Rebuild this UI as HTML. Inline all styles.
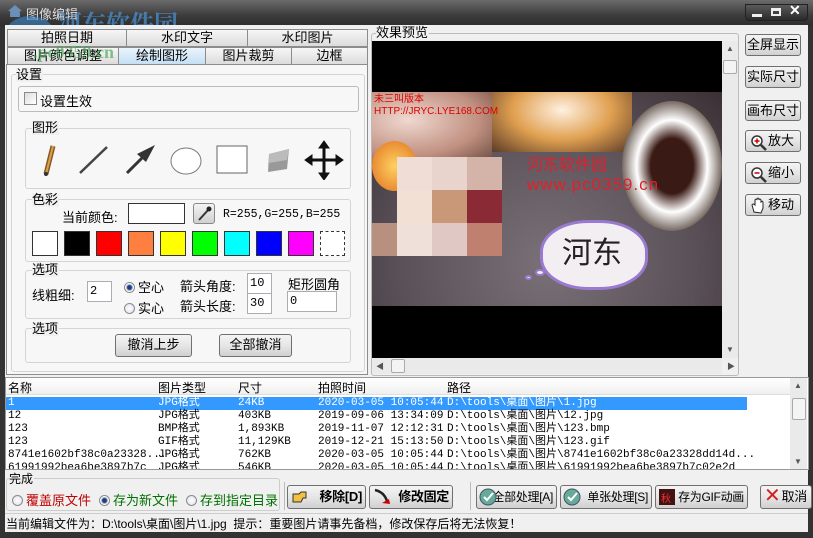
<!DOCTYPE html>
<html><head><meta charset="utf-8">
<style>
*{box-sizing:border-box;margin:0;padding:0}
body{width:813px;height:538px;overflow:hidden;background:#333;font-family:"Liberation Sans","Noto Sans CJK SC",sans-serif;font-size:12px;color:#000;position:relative}
.a{position:absolute}
.title{left:0;top:0;width:813px;height:26px;background:linear-gradient(#6a6a6a,#3c3c3c 60%,#2e2e2e)}
.client{left:5px;top:25px;width:803px;height:507px;background:#f0f0f0}
.tab{position:absolute;height:18px;border:1px solid #8c8c8c;background:linear-gradient(#f6f6f6,#dcdcdc);text-align:center;font-size:13px;line-height:16px}
.grp{position:absolute;border:1px solid #d4d4d4;border-radius:3px}
.lbl{position:absolute;background:#f0f0f0;font-size:13px;line-height:14px;padding-right:1px}
.btn{position:absolute;border:1px solid #707070;border-radius:3px;background:linear-gradient(#f4f4f4,#e6e6e6 50%,#d0d0d0);text-align:center;font-size:13px;line-height:20px}
.bb{font-size:12px;line-height:22px;text-align:right;padding-right:3px;white-space:nowrap;letter-spacing:-0.3px}
.inp{position:absolute;background:#fff;border:1px solid #abadb3;font-family:"Liberation Mono","Noto Sans CJK SC",monospace;font-size:12px;padding-left:2px;line-height:18px}
.sw{position:absolute;top:231px;width:26px;height:25px;border:1px solid #333}
.radio{display:inline-block;width:11px;height:11px;border-radius:50%;border:1px solid #8a8a8a;background:radial-gradient(#fff,#dde);vertical-align:-1px;margin-right:3px}
.radio.on{background:radial-gradient(#1a3c8a 30%,#9ab 45%,#fff 60%)}
.row{position:absolute;left:0;width:740px;height:13px;font-family:"Liberation Mono","Noto Sans CJK SC",monospace;font-size:11px;line-height:13px;white-space:nowrap}
.row span{position:absolute}
.sb{position:absolute;background:#eaeaea}
</style></head><body>
<div class="a title"></div>
<div class="a" style="left:8px;top:5px;width:14px;height:12px;background:#6c8fb8;clip-path:polygon(50% 0,100% 50%,85% 50%,85% 100%,15% 100%,15% 50%,0 50%)"></div>
<div class="a" style="left:26px;top:4px;color:#ddd;font-size:13px">图像编辑</div>
<div class="a" style="left:58px;top:4px;color:#4a8fd0;font-size:24px;font-weight:bold;opacity:.75;font-family:'Noto Serif CJK SC',serif">河东软件园</div>
<div class="a" style="left:5px;top:16px;width:50px;height:38px;border-radius:50%;background:#3d8fd8;opacity:.55"></div>
<div class="a" style="left:745px;top:4px;width:63px;height:17px;background:linear-gradient(#5a5a5a,#2a2a2a);border:1px solid #222;border-radius:0 0 4px 4px"></div>
<div class="a" style="left:752px;top:14px;width:10px;height:3px;background:#eee"></div>
<div class="a" style="left:771px;top:8px;width:10px;height:8px;border:2px solid #eee;border-top-width:3px"></div>
<div class="a" style="left:789px;top:2px;color:#fff;font-weight:bold;font-size:14px">✕</div>

<div class="a client"></div>
<div class="tab" style="left:7px;top:29px;width:120px">拍照日期</div>
<div class="tab" style="left:126px;top:29px;width:122px">水印文字</div>
<div class="tab" style="left:247px;top:29px;width:121px">水印图片</div>
<div class="tab" style="left:7px;top:47px;width:112px">图片颜色调整</div>
<div class="tab" style="left:118px;top:47px;width:88px;background:linear-gradient(#eaf4fb,#c4e0f4)">绘制图形</div>
<div class="tab" style="left:205px;top:47px;width:87px">图片裁剪</div>
<div class="tab" style="left:291px;top:47px;width:77px">边框</div>
<div class="a" style="left:33px;top:42px;color:#3aa04a;font-size:18px;font-weight:bold;opacity:.6;font-family:'Liberation Serif',serif">.pc0359.cn</div>
<div class="a" style="left:6px;top:64px;width:362px;height:311px;border:1px solid #8c8c8c;background:#f7f7f7"></div>

<div class="grp" style="left:11px;top:74px;width:354px;height:298px"></div>
<div class="lbl" style="left:16px;top:68px">设置</div>
<div class="grp" style="left:18px;top:86px;width:341px;height:26px;border-color:#bbb"></div>
<div class="a" style="left:24px;top:92px;width:13px;height:13px;border:1px solid #8a8a8a;background:linear-gradient(135deg,#ddd,#fff)"></div>
<div class="a" style="left:40px;top:91px;font-size:13px">设置生效</div>

<div class="grp" style="left:25px;top:128px;width:326px;height:61px"></div>
<div class="lbl" style="left:32px;top:121px">图形</div>
<svg class="a" style="left:25px;top:140px" width="326" height="40">
<g transform="translate(18,4)"><line x1="10" y1="2" x2="3" y2="30" stroke="#8a5a20" stroke-width="5"/><line x1="10" y1="2" x2="3" y2="30" stroke="#d9a050" stroke-width="2"/><circle cx="3" cy="30" r="2" fill="#333"/></g>
<line x1="55" y1="33" x2="82" y2="7" stroke="#444" stroke-width="2.5"/>
<line x1="102" y1="33" x2="120" y2="15" stroke="#333" stroke-width="3"/><polygon points="130,5 112,14 121,22" fill="#333"/>
<ellipse cx="161" cy="21" rx="15" ry="13" fill="#fff" stroke="#777"/>
<rect x="192" y="6" width="30" height="27" fill="#fff" stroke="#666"/>
<polygon points="244,14 264,9 262,29 243,32" fill="#999"/><polygon points="244,14 264,9 262,20 244,23" fill="#bbb"/>
<g fill="#111" stroke="#111"><line x1="299" y1="5" x2="299" y2="36" stroke-width="3"/><line x1="284" y1="20" x2="314" y2="20" stroke-width="3"/>
<polygon points="299,1 294,8 304,8"/><polygon points="299,40 294,33 304,33"/><polygon points="280,20 287,15 287,25"/><polygon points="318,20 311,15 311,25"/></g>
</svg>

<div class="grp" style="left:25px;top:199px;width:326px;height:63px"></div>
<div class="lbl" style="left:32px;top:193px">色彩</div>
<div class="a" style="left:62px;top:207px;font-size:13px">当前颜色:</div>
<div class="a" style="left:128px;top:203px;width:57px;height:21px;border:1px solid #333;background:#fff"></div>
<div class="a" style="left:193px;top:203px;width:22px;height:21px;border:1px solid #888;border-radius:3px;background:linear-gradient(#f4f4f4,#d0d0d0)"></div>
<svg class="a" style="left:196px;top:205px" width="17" height="17"><line x1="3" y1="15" x2="13" y2="4" stroke="#333" stroke-width="2"/><circle cx="13" cy="4" r="2.5" fill="#222"/></svg>
<div class="a" style="left:223px;top:208px;font-family:'Liberation Mono',monospace;font-size:11.5px">R=255,G=255,B=255</div>
<div class="sw" style="left:32px;background:#fff"></div>
<div class="sw" style="left:64px;background:#000"></div>
<div class="sw" style="left:96px;background:#f00"></div>
<div class="sw" style="left:128px;background:#ff7f40"></div>
<div class="sw" style="left:160px;background:#ff0"></div>
<div class="sw" style="left:192px;background:#0f0"></div>
<div class="sw" style="left:224px;background:#0ff"></div>
<div class="sw" style="left:256px;background:#00f"></div>
<div class="sw" style="left:288px;background:#f0f"></div>
<div class="sw" style="left:320px;width:25px;background:#fff;border:1px dashed #333"></div>

<div class="grp" style="left:25px;top:270px;width:326px;height:49px"></div>
<div class="lbl" style="left:32px;top:263px">选项</div>
<div class="a" style="left:32px;top:285px;font-size:13px">线粗细:</div>
<div class="inp" style="left:87px;top:281px;width:25px;height:21px">2</div>
<div class="a" style="left:124px;top:277px;font-size:13px"><span class="radio on"></span>空心</div>
<div class="a" style="left:124px;top:298px;font-size:13px"><span class="radio"></span>实心</div>
<div class="a" style="left:180px;top:276px;font-size:13px">箭头角度:</div>
<div class="a" style="left:180px;top:296px;font-size:13px">箭头长度:</div>
<div class="inp" style="left:247px;top:273px;width:25px;height:21px">10</div>
<div class="inp" style="left:247px;top:293px;width:25px;height:21px">30</div>
<div class="a" style="left:288px;top:274px;font-size:13px">矩形圆角</div>
<div class="inp" style="left:287px;top:291px;width:50px;height:21px">0</div>

<div class="grp" style="left:25px;top:328px;width:326px;height:35px"></div>
<div class="lbl" style="left:32px;top:322px">选项</div>
<div class="btn" style="left:115px;top:334px;width:77px;height:23px">撤消上步</div>
<div class="btn" style="left:219px;top:334px;width:73px;height:23px">全部撤消</div>

<!-- preview -->
<div class="grp" style="left:371px;top:33px;width:368px;height:343px;border-color:#bbb"></div>
<div class="lbl" style="left:376px;top:26px">效果预览</div>
<div class="a" style="left:372px;top:41px;width:350px;height:317px;background:#000;overflow:hidden">
 <div class="a" style="left:0;top:51px;width:350px;height:214px;background:radial-gradient(ellipse at 50% 80%,#7a7078,#5a5058 60%,#3a3034)"></div>
 <div class="a" style="left:0;top:51px;width:120px;height:70px;background:radial-gradient(ellipse at 30% 40%,#f0d8d0,#c09080 60%,#6a4a40)"></div>
 <div class="a" style="left:120px;top:51px;width:140px;height:60px;background:radial-gradient(ellipse at 50% 30%,#fff0e0,#e0a050 50%,#5a3a28)"></div>
 <div class="a" style="left:0;top:100px;width:45px;height:50px;border-radius:50%;background:radial-gradient(#ffd060,#e07020)"></div>
 <div class="a" style="left:25px;top:116px;width:35px;height:33px;background:#f0ddd6"></div>
 <div class="a" style="left:60px;top:116px;width:35px;height:33px;background:#e8d4cc"></div>
 <div class="a" style="left:95px;top:116px;width:35px;height:33px;background:#d4b4a8"></div>
 <div class="a" style="left:25px;top:149px;width:35px;height:33px;background:#f2e0d4"></div>
 <div class="a" style="left:60px;top:149px;width:35px;height:33px;background:#c89878"></div>
 <div class="a" style="left:95px;top:149px;width:35px;height:33px;background:#8a2a34"></div>
 <div class="a" style="left:25px;top:182px;width:35px;height:33px;background:#f0e0da"></div>
 <div class="a" style="left:60px;top:182px;width:35px;height:33px;background:#e0c8c4"></div>
 <div class="a" style="left:95px;top:182px;width:35px;height:33px;background:#c08070"></div>
 <div class="a" style="left:0;top:182px;width:25px;height:33px;background:#b89080"></div>
 <div class="a" style="left:250px;top:60px;width:100px;height:130px;border-radius:50%;background:radial-gradient(#3a1a14 30%,#fff 50%,#5a4a40 75%)"></div>
 <div class="a" style="left:168px;top:179px;width:108px;height:70px;border-radius:45%;background:#f2eef2;border:3px solid #9a7ad0"></div>
 <div class="a" style="left:190px;top:187px;font-size:30px;color:#222">河东</div>
 <div class="a" style="left:163px;top:228px;width:10px;height:7px;border-radius:50%;background:#f2eef2;border:2px solid #9a7ad0"></div>
 <div class="a" style="left:153px;top:234px;width:7px;height:5px;border-radius:50%;background:#f2eef2;border:2px solid #9a7ad0"></div>
 <div class="a" style="left:155px;top:110px;font-size:16px;color:#e0202a">河东软件园</div>
 <div class="a" style="left:155px;top:134px;font-size:17px;color:#e0202a;letter-spacing:1px">www.pc0359.cn</div>
 <div class="a" style="left:2px;top:53px;font-size:10px;color:#d00;line-height:12px">未三叫版本<br>HTTP://JRYC.LYE168.COM</div>
</div>
<div class="sb" style="left:722px;top:41px;width:16px;height:317px"></div>
<div class="a" style="left:723px;top:60px;width:14px;height:14px;border:1px solid #aaa;border-radius:2px;background:#f4f4f4"></div>
<div class="a" style="left:726px;top:44px;font-size:8px;color:#555">▲</div>
<div class="a" style="left:726px;top:345px;font-size:8px;color:#555">▼</div>
<div class="sb" style="left:372px;top:358px;width:350px;height:16px"></div>
<div class="a" style="left:391px;top:359px;width:14px;height:14px;border:1px solid #aaa;border-radius:2px;background:#f4f4f4"></div>
<div class="a" style="left:376px;top:361px;font-size:8px;color:#555">◀</div>
<div class="a" style="left:727px;top:361px;font-size:8px;color:#555">▶</div>

<div class="btn" style="left:745px;top:34px;width:56px;height:22px">全屏显示</div>
<div class="btn" style="left:745px;top:66px;width:56px;height:22px">实际尺寸</div>
<div class="btn" style="left:745px;top:100px;width:56px;height:21px">画布尺寸</div>
<div class="btn" style="left:745px;top:130px;width:56px;height:22px;text-align:right;padding-right:6px">放大</div>
<div class="btn" style="left:745px;top:162px;width:56px;height:22px;text-align:right;padding-right:6px">缩小</div>
<div class="btn" style="left:745px;top:194px;width:56px;height:22px;text-align:right;padding-right:6px">移动</div>
<svg class="a" style="left:750px;top:134px" width="18" height="18"><circle cx="7" cy="7" r="5" fill="#fff" stroke="#333" stroke-width="1.5"/><line x1="11" y1="11" x2="16" y2="16" stroke="#333" stroke-width="2.5"/><path d="M4.5 7h5M7 4.5v5" stroke="#c00" stroke-width="1.5"/></svg>
<svg class="a" style="left:750px;top:166px" width="18" height="18"><circle cx="7" cy="7" r="5" fill="#fff" stroke="#333" stroke-width="1.5"/><line x1="11" y1="11" x2="16" y2="16" stroke="#333" stroke-width="2.5"/><path d="M4.5 7h5" stroke="#c00" stroke-width="1.5"/></svg>
<svg class="a" style="left:750px;top:197px" width="18" height="18"><path d="M4 15 L2 8 Q3 6 5 8 V3 Q6 1 7 3 V2 Q8 0 9 2 V3 Q10 1 11 3 V5 Q13 3 13 6 V11 L11 16 Z" fill="#fff" stroke="#222"/></svg>

<!-- list -->
<div class="a" style="left:5px;top:377px;width:804px;height:93px;background:#fff;border:1px solid #999"></div>
<div class="a" style="left:6px;top:378px;width:784px;height:17px;background:linear-gradient(#fff,#f0f0f0);border-bottom:1px solid #ddd"></div>
<div class="a" style="left:8px;top:379px;font-size:12px">名称</div>
<div class="a" style="left:158px;top:379px;font-size:12px">图片类型</div>
<div class="a" style="left:238px;top:379px;font-size:12px">尺寸</div>
<div class="a" style="left:318px;top:379px;font-size:12px">拍照时间</div>
<div class="a" style="left:447px;top:379px;font-size:12px">路径</div>
<div class="a" style="left:6px;top:397px;width:741px;height:13px;background:#3399ff"></div>
<div class="a" style="left:6px;top:397px;width:784px;height:72px;overflow:hidden">
<div class="row" style="top:0;color:#fff"><span style="left:2px">1</span><span style="left:152px">JPG格式</span><span style="left:232px">24KB</span><span style="left:312px">2020-03-05 10:05:44</span><span style="left:441px">D:\tools\桌面\图片\1.jpg</span></div>
<div class="row" style="top:13px"><span style="left:2px">12</span><span style="left:152px">JPG格式</span><span style="left:232px">403KB</span><span style="left:312px">2019-09-06 13:34:09</span><span style="left:441px">D:\tools\桌面\图片\12.jpg</span></div>
<div class="row" style="top:26px"><span style="left:2px">123</span><span style="left:152px">BMP格式</span><span style="left:232px">1,893KB</span><span style="left:312px">2019-11-07 12:12:31</span><span style="left:441px">D:\tools\桌面\图片\123.bmp</span></div>
<div class="row" style="top:39px"><span style="left:2px">123</span><span style="left:152px">GIF格式</span><span style="left:232px">11,129KB</span><span style="left:312px">2019-12-21 15:13:50</span><span style="left:441px">D:\tools\桌面\图片\123.gif</span></div>
<div class="row" style="top:52px"><span style="left:2px">8741e1602bf38c0a23328...</span><span style="left:152px">JPG格式</span><span style="left:232px">762KB</span><span style="left:312px">2020-03-05 10:05:44</span><span style="left:441px">D:\tools\桌面\图片\8741e1602bf38c0a23328dd14d...</span></div>
<div class="row" style="top:65px"><span style="left:2px">61991992bea6be3897b7c</span><span style="left:152px">JPG格式</span><span style="left:232px">546KB</span><span style="left:312px">2020-03-05 10:05:44</span><span style="left:441px">D:\tools\桌面\图片\61991992bea6be3897b7c02e2d</span></div>
</div>
<div class="sb" style="left:790px;top:378px;width:17px;height:91px"></div>
<div class="a" style="left:792px;top:398px;width:14px;height:22px;border:1px solid #aaa;border-radius:2px;background:#f4f4f4"></div>
<div class="a" style="left:794px;top:381px;font-size:8px;color:#555">▲</div>
<div class="a" style="left:794px;top:457px;font-size:8px;color:#555">▼</div>

<!-- bottom -->
<div class="grp" style="left:6px;top:478px;width:274px;height:33px;border-color:#ccc"></div>
<div class="lbl" style="left:9px;top:472px;font-size:12px">完成</div>
<div class="a" style="left:12px;top:490px;font-size:13px;color:#c00000"><span class="radio"></span>覆盖原文件</div>
<div class="a" style="left:99px;top:490px;font-size:13px;color:#007000"><span class="radio on"></span>存为新文件</div>
<div class="a" style="left:186px;top:490px;font-size:13px;color:#007000"><span class="radio"></span>存到指定目录</div>
<div class="a" style="left:284px;top:482px;width:1px;height:28px;background:#bbb"></div>
<div class="a" style="left:470px;top:482px;width:1px;height:28px;background:#bbb"></div>
<div class="btn bb" style="left:287px;top:485px;width:79px;height:24px;font-weight:bold;font-size:13px">移除[D]</div>
<div class="btn bb" style="left:369px;top:485px;width:84px;height:24px;font-weight:bold;font-size:13px">修改固定</div>
<div class="btn bb" style="left:476px;top:485px;width:81px;height:24px">全部处理[A]</div>
<div class="btn bb" style="left:560px;top:485px;width:92px;height:24px">单张处理[S]</div>
<div class="btn bb" style="left:655px;top:485px;width:93px;height:24px">存为GIF动画</div>
<div class="btn bb" style="left:760px;top:485px;width:52px;height:24px;padding-right:4px;font-size:13px">取消</div>
<svg class="a" style="left:291px;top:489px" width="18" height="16"><path d="M2 5h6l2-2h5v6h-3l-2 4H2z" fill="#f4c040" stroke="#333"/></svg>
<svg class="a" style="left:372px;top:487px" width="20" height="20"><path d="M3 3 Q12 5 15 14" stroke="#222" stroke-width="2.5" fill="none"/><path d="M10 16 L17 12 L18 17 Z" fill="#c00"/></svg>
<svg class="a" style="left:479px;top:488px" width="18" height="18"><circle cx="9" cy="9" r="8" fill="#6a9" stroke="#456"/><path d="M5 9 L8 12 L14 5" stroke="#fff" stroke-width="2" fill="none"/></svg>
<svg class="a" style="left:563px;top:488px" width="18" height="18"><circle cx="9" cy="9" r="8" fill="#6a9" stroke="#456"/><path d="M5 9 L8 12 L14 5" stroke="#fff" stroke-width="2" fill="none"/></svg>
<svg class="a" style="left:658px;top:488px" width="18" height="18"><rect x="1" y="1" width="16" height="16" fill="#411" /><text x="3" y="14" font-size="10" fill="#e33" font-family="Liberation Sans">秋</text></svg>
<div class="a" style="left:764px;top:484px;color:#d02020;font-size:20px;line-height:24px">✕</div>

<div class="a" style="left:5px;top:513px;width:803px;height:19px;border-top:1px solid #ccc"></div>
<div class="a" style="left:6px;top:515px;font-size:12px">当前编辑文件为：D:\tools\桌面\图片\1.jpg&nbsp; 提示：重要图片请事先备档，修改保存后将无法恢复！</div>
</body></html>
